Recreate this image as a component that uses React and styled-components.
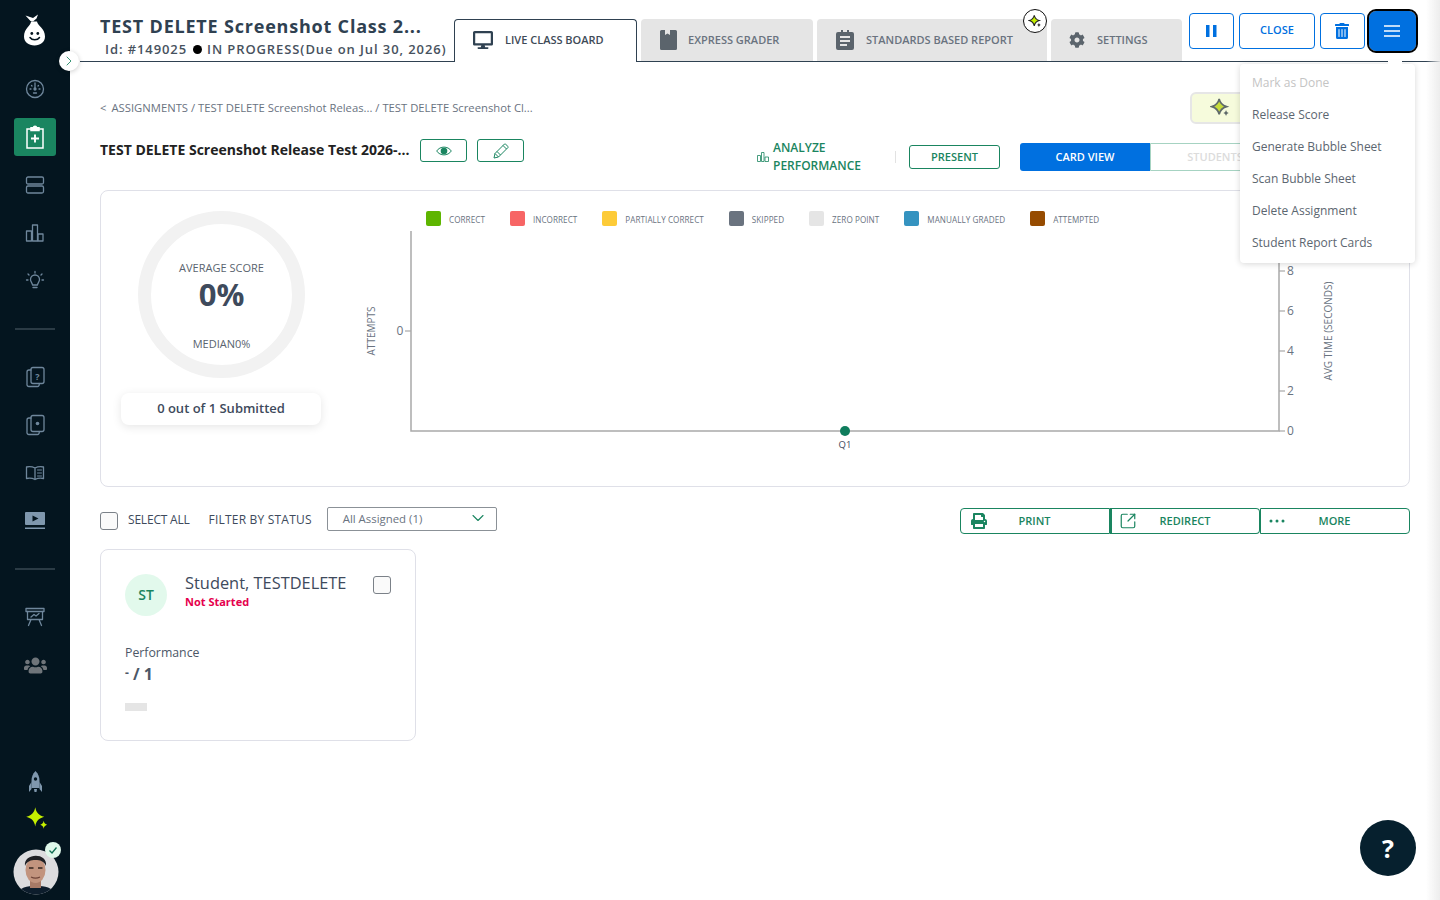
import styled, { createGlobalStyle } from "styled-components";
import { FaPrint, FaCog, FaTrashAlt, FaUsers, FaDesktop } from "react-icons/fa";
import { ChevronRight, ChevronDown, SquareArrowOutUpRight } from "lucide-react";

const GREEN = "#1a8560";
const BLUE = "#0070e0";
const SLATE = "#2f4151";
const GRAY = "#6a737f";

const GlobalStyle = createGlobalStyle`
  html, body { margin: 0; padding: 0; height: 100%; background: #fff; }
  body { font-family: "Open Sans", "Liberation Sans", sans-serif; overflow: hidden; }
  * { box-sizing: border-box; }
`;

const Page = styled.div`
  display: flex;
  width: 1440px;
  height: 900px;
  overflow: hidden;
`;

const Sidebar = styled.aside`
  flex: 0 0 70px;
  background: #04151f;
  display: flex;
  flex-direction: column;
  align-items: center;
  position: relative;
  color: #6f879c;
`;

const LogoWrap = styled.div`
  height: 65px;
  padding-top: 14px;
`;

const NavSlot = styled.div`
  width: 42px;
  height: 38px;
  margin: 5px 0;
  display: flex;
  align-items: center;
  justify-content: center;
  border-radius: 3px;
  background: ${(p) => (p.$active ? GREEN : "transparent")};
  color: ${(p) => (p.$active ? "#fff" : p.$muted ? "#6f757a" : "inherit")};
`;

const NavRule = styled.div`
  width: 40px;
  height: 2px;
  margin: 23px 0;
  background: #2b3b45;
`;

const BottomNav = styled.div`
  margin-top: auto;
  display: flex;
  flex-direction: column;
  align-items: center;
  padding-bottom: 5px;
`;

const BottomSlot = styled.div`
  height: 37px;
  padding-left: ${(p) => p.$shift || 0}px;
  display: flex;
  align-items: center;
  justify-content: center;
`;

const AvatarWrap = styled.div`
  position: relative;
  width: 46px;
  height: 46px;
  margin: 12px 0 0 1px;
`;

const AvatarBadge = styled.span`
  position: absolute;
  top: -7px;
  right: -2px;
  width: 16px;
  height: 16px;
  border-radius: 50%;
  background: #dff8ea;
  display: flex;
  align-items: center;
  justify-content: center;
`;

const SideToggle = styled.button`
  position: absolute;
  top: 51px;
  left: 59px;
  width: 20px;
  height: 20px;
  padding: 0;
  border: 0;
  border-radius: 50%;
  background: #fff;
  color: ${GREEN};
  box-shadow: 0 1px 5px rgba(0, 0, 0, 0.2);
  display: flex;
  align-items: center;
  justify-content: center;
  z-index: 5;
`;

const Main = styled.main`
  flex: 1;
  min-width: 0;
  position: relative;
`;

const Header = styled.header`
  height: 62px;
  margin-left: 10px;
  border-bottom: 1px solid ${SLATE};
  display: flex;
  position: relative;
`;

const TitleBlock = styled.div`
  width: 374px;
  padding: 14px 0 0 20px;
`;

const ClassTitle = styled.div`
  font-size: 18px;
  line-height: 25px;
  font-weight: 700;
  letter-spacing: 0.8px;
  color: ${SLATE};
  white-space: nowrap;
`;

const ClassMeta = styled.div`
  display: flex;
  align-items: center;
  margin: 1px 0 0 5px;
  font-size: 13px;
  line-height: 18px;
  font-weight: 600;
  letter-spacing: 0.91px;
  color: #47525e;
  white-space: nowrap;
`;

const MetaDot = styled.span`
  width: 9px;
  height: 9px;
  margin: 0 5px 0 6px;
  border-radius: 50%;
  background: #000;
`;

const Tabs = styled.nav`
  display: flex;
  gap: 4px;
  height: 43px;
  margin-top: 19px;
`;

const Tab = styled.div`
  position: relative;
  width: ${(p) => p.$w}px;
  height: ${(p) => (p.$active ? 43 : 42)}px;
  padding-left: ${(p) => p.$pad}px;
  display: flex;
  align-items: center;
  gap: ${(p) => p.$gap}px;
  padding-bottom: ${(p) => (p.$active ? 3 : 1)}px;
  font-size: 11px;
  font-weight: 600;
  color: ${(p) => (p.$active ? "#3e4a57" : GRAY)};
  white-space: nowrap;
  border-radius: 4px 4px 0 0;
  background: ${(p) => (p.$active ? "#fff" : "#e5e5e5")};
  border: ${(p) => (p.$active ? `1px solid ${SLATE}` : "0")};
  border-bottom: 0;
  z-index: 1;
`;

const TabIcon = styled.span`
  display: flex;
  width: 20px;
  justify-content: center;
  color: ${(p) => (p.$active ? SLATE : "#5b646c")};
`;

const SparkBadge = styled.span`
  position: absolute;
  top: -10px;
  right: 0;
  width: 24px;
  height: 24px;
  border-radius: 50%;
  background: #fff;
  border: 1px solid #111;
  display: flex;
  align-items: center;
  justify-content: center;
`;

const Actions = styled.div`
  display: flex;
  align-items: center;
  gap: 5px;
  margin-left: 7px;
  height: 62px;
`;

const HeadButton = styled.button`
  width: ${(p) => p.$w}px;
  height: 36px;
  padding: 0 ${(p) => p.$nudge || 0}px ${(p) => (p.$text ? 3 : 0)}px 0;
  background: #fff;
  border: 1px solid ${BLUE};
  border-radius: 4px;
  color: ${BLUE};
  font-family: inherit;
  font-size: 11px;
  font-weight: 600;
  display: flex;
  align-items: center;
  justify-content: center;
`;

const MenuButton = styled.button`
  width: 47px;
  height: 40px;
  margin-left: -1px;
  padding: 0 2px 0 0;
  border: 0;
  border-radius: 7px;
  background: ${BLUE};
  outline: 2px solid #000;
  color: #fff;
  display: flex;
  align-items: center;
  justify-content: center;
`;

const Dropdown = styled.ul`
  position: absolute;
  top: 64px;
  left: 1160px;
  width: 175px;
  height: 199px;
  margin: 0;
  padding: 2px 0 0;
  list-style: none;
  background: #fff;
  border-radius: 4px;
  box-shadow: 0 1px 6px rgba(0, 0, 0, 0.16);
  z-index: 4;
  &::before {
    content: "";
    position: absolute;
    top: -4px;
    left: 148px;
    width: 14px;
    height: 5px;
    background: #fff;
  }
`;

const DropItem = styled.li`
  height: 32px;
  padding-left: 12px;
  display: flex;
  align-items: center;
  font-size: 12px;
  color: ${(p) => (p.$disabled ? "#c4c4c4" : "#5c6670")};
  white-space: nowrap;
`;

const Content = styled.div`
  padding: 0 30px;
`;

const CrumbRow = styled.div`
  margin-top: 30px;
  height: 32px;
  display: flex;
  align-items: center;
  justify-content: space-between;
`;

const Crumbs = styled.div`
  padding-bottom: 2px;
  font-size: 11.28px;
  color: ${GRAY};
  white-space: nowrap;
`;

const CrumbBack = styled.span`
  margin-right: 5px;
`;

const AiPill = styled.div`
  width: 80px;
  height: 32px;
  margin-right: 140px;
  padding-left: 18px;
  background: #f6fbdc;
  border: 2px solid #e6e6e6;
  border-radius: 6px;
  display: flex;
  align-items: center;
`;

const AssignRow = styled.div`
  margin-top: 15px;
  height: 32px;
  display: flex;
  align-items: flex-start;
`;

const AssignTitle = styled.div`
  height: 23px;
  width: 320px;
  font-size: 14px;
  line-height: 21px;
  font-weight: 700;
  color: #222;
  white-space: nowrap;
`;

const OutlineIcon = styled.button`
  width: 47px;
  height: 23px;
  margin-right: 10px;
  padding: 0;
  background: #fff;
  border: 1px solid ${GREEN};
  border-radius: 3px;
  color: ${GREEN};
  display: flex;
  align-items: center;
  justify-content: center;
`;

const ToolGroup = styled.div`
  margin: 4px 130px 0 auto;
  height: 28px;
  display: flex;
  align-items: center;
`;

const Analyze = styled.div`
  display: flex;
  align-items: center;
  gap: 4px;
  width: 138px;
  height: 36px;
  font-size: 12px;
  line-height: 18px;
  font-weight: 600;
  color: ${GREEN};
`;

const ToolRule = styled.span`
  width: 1px;
  height: 12px;
  margin-right: 13px;
  background: #e2e2e2;
`;

const PresentBtn = styled.button`
  width: 91px;
  height: 24px;
  margin-right: 20px;
  padding: 0 0 2px;
  background: #fff;
  border: 1px solid ${GREEN};
  border-radius: 3px;
  color: ${GREEN};
  font-family: inherit;
  font-size: 11px;
  font-weight: 600;
`;

const ViewBtn = styled.div`
  width: 130px;
  height: 28px;
  padding-bottom: 2px;
  display: flex;
  align-items: center;
  justify-content: center;
  font-size: 11px;
  font-weight: 600;
  border-radius: ${(p) => (p.$on ? "3px 0 0 3px" : "0 3px 3px 0")};
  background: ${(p) => (p.$on ? BLUE : "#fff")};
  color: ${(p) => (p.$on ? "#fff" : "#dcdcdc")};
  border: ${(p) => (p.$on ? "0" : "1px solid #a6d3c2")};
`;

const Panel = styled.section`
  margin-top: 19px;
  height: 297px;
  border: 1px solid #dfe0e8;
  border-radius: 8px;
  display: flex;
`;

const ScoreCol = styled.div`
  width: 259px;
  padding: 20px 0 0 20px;
  display: flex;
  flex-direction: column;
`;

const Ring = styled.div`
  width: 167px;
  height: 167px;
  margin-left: 17px;
  border: 13px solid #f2f2f2;
  border-radius: 50%;
  display: flex;
  flex-direction: column;
  align-items: center;
  font-size: 11px;
`;

const RingLabel = styled.div`
  margin-top: 36px;
  line-height: 16px;
  font-weight: 500;
  color: #59636e;
`;

const RingValue = styled.div`
  font-size: 31px;
  line-height: 36px;
  font-weight: 700;
  color: #3e4a5c;
`;

const RingMedian = styled.div`
  margin-top: 24px;
  line-height: 16px;
  font-weight: 500;
  color: #59636e;
`;

const SubmittedPill = styled.div`
  width: 200px;
  height: 32px;
  margin-top: 15px;
  padding-bottom: 2px;
  border-radius: 8px;
  background: #fff;
  box-shadow: 0 2px 10px rgba(0, 0, 0, 0.1);
  display: flex;
  align-items: center;
  justify-content: center;
  font-size: 13px;
  font-weight: 600;
  color: #3e4a5c;
`;

const ChartCol = styled.div`
  flex: 1;
  padding-top: 20px;
`;

const Legend = styled.div`
  display: flex;
  height: 15px;
  margin-left: 66px;
  gap: 25px;
`;

const LegendItem = styled.div`
  display: flex;
  align-items: center;
  gap: 8px;
  font-size: 8.13px;
  font-weight: 500;
  letter-spacing: 0.05px;
  color: ${GRAY};
  white-space: nowrap;
`;

const LegendLabel = styled.span`
  padding-top: 1px;
`;

const Swatch = styled.span`
  width: 15px;
  height: 15px;
  border-radius: 2px;
  background: ${(p) => p.$c};
`;

const ChartSvg = styled.svg`
  display: block;
  margin-top: 4px;
  font-family: "Open Sans", "Liberation Sans", sans-serif;
`;

const FilterRow = styled.div`
  margin-top: 20px;
  height: 27px;
  display: flex;
  align-items: center;
`;

const Check = styled.span`
  flex: none;
  width: 18px;
  height: 18px;
  border: 1px solid #7b8188;
  border-radius: 3px;
  background: #fafafa;
`;

const FilterText = styled.span`
  margin-left: ${(p) => p.$ml}px;
  padding-bottom: 2px;
  font-size: 12px;
  font-weight: 500;
  letter-spacing: ${(p) => p.$ls}px;
  color: #3e4a5c;
  white-space: nowrap;
`;

const SelectBox = styled.div`
  width: 170px;
  height: 24px;
  margin: -3px 0 0 15px;
  padding: 0 8px 2px 15px;
  border: 1px solid #8b9197;
  border-radius: 2px;
  display: flex;
  align-items: center;
  justify-content: space-between;
  font-size: 11.4px;
  color: ${GRAY};
`;

const BtnGroup = styled.div`
  margin-left: auto;
  display: flex;
  padding-top: 1px;
`;

const GroupBtn = styled.button`
  position: relative;
  width: 150px;
  height: 26px;
  padding: 0 1px 2px 0;
  background: #fff;
  border: 1px solid ${GREEN};
  border-left-width: ${(p) => (p.$thick ? 2 : 1)}px;
  border-radius: ${(p) => p.$r};
  color: ${GREEN};
  font-family: inherit;
  font-size: 11px;
  font-weight: 600;
  display: flex;
  align-items: center;
  justify-content: center;
`;

const GroupIcon = styled.span`
  position: absolute;
  left: ${(p) => p.$left}px;
  top: ${(p) => p.$top}px;
  display: flex;
`;

const StudentCard = styled.article`
  width: 316px;
  height: 192px;
  margin-top: 15px;
  padding: 24px 24px 0;
  border: 1px solid #dfe0e8;
  border-radius: 8px;
`;

const CardTop = styled.div`
  display: flex;
  align-items: flex-start;
`;

const Initials = styled.div`
  flex: none;
  width: 42px;
  height: 42px;
  padding-bottom: 2px;
  border-radius: 50%;
  background: #e2f9ec;
  color: ${GREEN};
  font-size: 14px;
  font-weight: 600;
  display: flex;
  align-items: center;
  justify-content: center;
`;

const NameBlock = styled.div`
  flex: 1;
  margin: -1px 0 0 18px;
`;

const StudentName = styled.div`
  font-size: 16.4px;
  line-height: 20px;
  font-weight: 500;
  color: #3e4a5c;
  white-space: nowrap;
`;

const StudentStatus = styled.div`
  font-size: 11px;
  line-height: 18px;
  font-weight: 700;
  color: #e5004d;
`;

const CardCheck = styled(Check)`
  margin-top: 2px;
`;

const PerfLabel = styled.div`
  margin-top: 28px;
  font-size: 12.3px;
  line-height: 18px;
  color: #4c5767;
`;

const PerfValue = styled.div`
  font-size: 16px;
  line-height: 22px;
  font-weight: 700;
  color: #4c5767;
`;

const PerfDash = styled.span`
  font-size: 12px;
  vertical-align: 3px;
`;

const PerfBar = styled.div`
  width: 22px;
  height: 8px;
  margin-top: 18px;
  background: #e5e5e5;
`;

const HelpBtn = styled.button`
  position: fixed;
  left: 1360px;
  top: 820px;
  width: 56px;
  height: 56px;
  padding: 0;
  border: 0;
  border-radius: 50%;
  background: #06202e;
  color: #fff;
  font-family: inherit;
  font-size: 25px;
  font-weight: 700;
`;

const EdgeShade = styled.div`
  position: fixed;
  top: 0;
  right: 0;
  width: 14px;
  height: 900px;
  background: linear-gradient(to right, rgba(235, 235, 235, 0), rgba(235, 235, 235, 0.9));
  pointer-events: none;
  z-index: 6;
`;

const Line = ({ children, size = 26, ...rest }) => (
  <svg width={size} height={size} viewBox="0 0 26 26" fill="none" stroke="currentColor" strokeWidth="1.3" strokeLinecap="round" strokeLinejoin="round" {...rest}>
    {children}
  </svg>
);

const Logo = () => (
  <svg width="22" height="32" viewBox="0 0 22 32">
    <path d="M1.500 1.500 L6 3 L9 4 L14 0.500 L12.500 4.500 L9 7.500 L6.500 7 Z" fill="#fff" />
    <path d="M7 7.500 h6 c.5 4 8 7 8 15 c0 5.500-4.500 9-10.500 9 C4.500 31.500 0 28 0 22.500 C0 14.500 7 11.500 7 7.500 z" fill="#fff" />
    <circle cx="7.800" cy="19.500" r="1.400" fill="#04151f" />
    <circle cx="13.800" cy="19.500" r="1.400" fill="#04151f" />
    <path d="M6 23.500 c2 3 7.500 3 9.500 0" stroke="#04151f" strokeWidth="1.500" fill="none" strokeLinecap="round" />
  </svg>
);

const Sparkle = ({ size = 22, color = "#c6f000", stroke = "none", small }) => (
  <svg width={size} height={size} viewBox="0 0 24 24">
    <path d="M10 2 C11 7 13 9 18 10.500 C13 12 11 14 10 19 C9 14 7 12 2 10.500 C7 9 9 7 10 2 Z" fill={color} stroke={stroke} strokeWidth="1.800" />
    <path d="M17.500 14 C17.900 16 18.500 16.800 20.500 17.500 C18.500 18.200 17.900 19 17.500 21 C17.100 19 16.500 18.200 14.500 17.500 C16.500 16.800 17.100 16 17.500 14 Z" fill={small || color} />
  </svg>
);

const Rocket = () => (
  <svg width="13" height="22" viewBox="0 0 13 22" fill="#7f97ad">
    <path d="M6.500 0 C9.500 3 10.500 6 10.500 10 L10.500 17 L2.500 17 L2.500 10 C2.500 6 3.500 3 6.500 0 Z" />
    <path d="M2.500 11 L0 15 L0 21 L2.500 18 Z M10.500 11 L13 15 L13 21 L10.500 18 Z M5 18 h3 l-.5 3 h-2 z" />
    <circle cx="6.500" cy="8" r="1.700" fill="#04151f" />
  </svg>
);

const Face = () => (
  <svg width="46" height="46" viewBox="0 0 46 46">
    <clipPath id="faceClip"><circle cx="23" cy="23" r="22.500" /></clipPath>
    <g clipPath="url(#faceClip)">
      <rect width="46" height="46" fill="#dcdcde" />
      <path d="M4 46 C6 38 14 37 23 37 C32 37 40 38 42 46 Z" fill="#0d1d2c" />
      <rect x="17" y="28" width="11" height="11" fill="#a87a66" />
      <ellipse cx="22.500" cy="21" rx="10" ry="13" fill="#c2947e" />
      <path d="M12 17 C10 4 35 3 33 17 C31 12 27 11 22.500 11 C18 11 14 12 12 17 Z" fill="#1f2024" />
      <path d="M16 19 h4.500 M25 19 h4.500" stroke="#35251f" strokeWidth="1.400" />
      <path d="M18 28 c3 1.500 6 1.500 9 0" stroke="#6f4438" strokeWidth="1.200" fill="none" />
    </g>
  </svg>
);

const ClipboardIcon = () => (
  <svg width="18" height="24" viewBox="0 0 18 24" fill="none" stroke="#fff" strokeWidth="1.500">
    <path d="M5 4 H1 V23 H17 V4 H13" />
    <path d="M5 5.500 V2.800 H7.500 C7.500 .6 10.500 .6 10.500 2.800 H13 V5.500 Z" fill="#fff" />
    <path d="M9 9.500 V17.500 M5 13.500 H13" strokeWidth="1.900" />
  </svg>
);

const BookIcon = () => (
  <svg width="17" height="20" viewBox="0 0 17 20" fill="currentColor">
    <path d="M1.500 0 H5 V5 L7.500 3.500 L10 5 V0 H15.500 A1.500 1.500 0 0 1 17 1.500 V18.500 A1.500 1.500 0 0 1 15.500 20 H1.500 A1.500 1.500 0 0 1 0 18.500 V1.500 A1.500 1.500 0 0 1 1.500 0 Z" />
  </svg>
);

const ReportIcon = () => (
  <svg width="18" height="20" viewBox="0 0 18 20">
    <path d="M2 2 H5 V0 H7 V2 H11 V0 H13 V2 H16 A2 2 0 0 1 18 4 V18 A2 2 0 0 1 16 20 H2 A2 2 0 0 1 0 18 V4 A2 2 0 0 1 2 2 Z" fill="currentColor" />
    <path d="M4 7 H14 M4 11 H14 M4 15 H11" stroke="#e5e5e5" strokeWidth="1.800" />
  </svg>
);

const EyeIcon = () => (
  <svg width="16" height="12" viewBox="0 0 16 12" fill="none" stroke="currentColor" strokeWidth="1">
    <path d="M.7 6 C4 .8 12 .8 15.300 6 C12 11.200 4 11.200 .7 6 Z" />
    <circle cx="8" cy="6" r="3.300" fill="currentColor" stroke="none" />
  </svg>
);

const PencilIcon = () => (
  <svg width="16" height="16" viewBox="0 0 16 16" fill="none" stroke="currentColor" strokeWidth="1" strokeLinejoin="round">
    <path d="M1 15 L2 10.500 L11.500 1 C12.500 0.500 15.500 3.500 15 4.500 L5.500 14 Z" />
    <path d="M2 10.500 L5.500 14 M4 8.500 L7.500 12 M10 2.500 L13.500 6" />
  </svg>
);

const legendItems = [
  ["CORRECT", "#5eb500"],
  ["INCORRECT", "#f76565"],
  ["PARTIALLY CORRECT", "#fdcb38"],
  ["SKIPPED", "#6a737f"],
  ["ZERO POINT", "#e5e5e5"],
  ["MANUALLY GRADED", "#3593c0"],
  ["ATTEMPTED", "#964b00"],
];

const menuItems = ["Release Score", "Generate Bubble Sheet", "Scan Bubble Sheet", "Delete Assignment", "Student Report Cards"];

const rightTicks = [0, 2, 4, 6, 8];

const Chart = () => (
  <ChartSvg width="990" height="235" viewBox="360 230 990 235">
    <path d="M411 231 V431 H1279 V231" fill="none" stroke="#a9a9a9" strokeWidth="1.500" />
    <path d="M405 331 H411" stroke="#a9a9a9" strokeWidth="1.200" />
    <text x="400" y="335" textAnchor="middle" fontSize="12" fill="#6a737f">0</text>
    <text transform="translate(375 331) rotate(-90)" textAnchor="middle" fontSize="10" fill="#6a737f">ATTEMPTS</text>
    {rightTicks.map((t) => (
      <g key={t}>
        <path d={`M1279 ${431 - t * 20} H1285`} stroke="#a9a9a9" strokeWidth="1.200" />
        <text x="1287" y={435 - t * 20} fontSize="12" fill="#6a737f">{t}</text>
      </g>
    ))}
    <text transform="translate(1332 331) rotate(-90)" textAnchor="middle" fontSize="10" fill="#6a737f">AVG TIME (SECONDS)</text>
    <circle cx="845" cy="431" r="5" fill="#0f7d5d" />
    <text x="845" y="448" textAnchor="middle" fontSize="9.500" fontWeight="500" fill="#3e4a5c">Q1</text>
  </ChartSvg>
);

export default function App() {
  return (
    <Page>
      <GlobalStyle />
      <Sidebar>
        <LogoWrap><Logo /></LogoWrap>
        <NavSlot>
          <Line>
            <circle cx="13" cy="13" r="8.500" />
            <path d="M13 13 V7 M8 13 H9 M17 13 H18 M9.500 9.500 L10 10 M16.500 9.500 L16 10 M11.500 17 H14.500" />
            <circle cx="13" cy="13" r="1" fill="currentColor" />
          </Line>
        </NavSlot>
        <NavSlot $active><ClipboardIcon /></NavSlot>
        <NavSlot>
          <Line><rect x="4.500" y="5" width="17" height="7" rx="1.500" /><rect x="4.500" y="14" width="17" height="7" rx="1.500" /></Line>
        </NavSlot>
        <NavSlot>
          <Line><rect x="4.500" y="11" width="5" height="10" /><rect x="10.500" y="5" width="5" height="16" /><rect x="16" y="14" width="5" height="7" /></Line>
        </NavSlot>
        <NavSlot>
          <Line>
            <path d="M10.500 17 C10.500 15 8.500 14 8.500 11.500 A4.500 4.500 0 0 1 17.500 11.500 C17.500 14 15.500 15 15.500 17 Z M11 19.500 H15" />
            <path d="M13 3.500 V5 M6 6 L7 7 M20 6 L19 7 M4.500 12 H6 M20 12 H21.500" />
          </Line>
        </NavSlot>
        <NavRule />
        <NavSlot>
          <Line>
            <rect x="9" y="3.500" width="13" height="16" rx="2" />
            <path d="M9 6 H7 A2 2 0 0 0 5 8 V20 A2 2 0 0 0 7 22.500 H15 A2 2 0 0 0 17 19.500" />
            <text x="15.500" y="15.500" textAnchor="middle" fontSize="9" fontWeight="700" fill="currentColor" stroke="none">?</text>
          </Line>
        </NavSlot>
        <NavSlot>
          <Line>
            <rect x="9" y="3.500" width="13" height="16" rx="2" />
            <path d="M9 6 H7 A2 2 0 0 0 5 8 V20 A2 2 0 0 0 7 22.500 H15 A2 2 0 0 0 17 19.500" />
            <circle cx="15.500" cy="11.500" r="1.800" fill="currentColor" stroke="none" />
          </Line>
        </NavSlot>
        <NavSlot>
          <Line>
            <path d="M13 8 C10 6.500 7 6.500 4.500 7 V18.500 C7 18 10 18 13 19.500 C16 18 19 18 21.500 18.500 V7 C19 6.500 16 6.500 13 8 Z M13 8 V19.500" />
            <path d="M15.500 10 H19.500 M15.500 13 H19.500 M15.500 16 H19.500" strokeWidth="1" />
          </Line>
        </NavSlot>
        <NavSlot>
          <svg width="26" height="26" viewBox="0 0 26 26">
            <rect x="3" y="4" width="20" height="13" rx="1" fill="#7f97ad" />
            <path d="M10.500 7.500 L16.500 10.500 L10.500 13.500 Z" fill="#04151f" />
            <rect x="3" y="19.500" width="20" height="1.500" fill="#7f97ad" />
          </svg>
        </NavSlot>
        <NavRule />
        <NavSlot>
          <Line>
            <rect x="4" y="4.500" width="18" height="3" />
            <path d="M5.500 7.500 V15.500 H20.500 V7.500 M9 15.500 L6.500 21.500 M17 15.500 L19.500 21.500 M9 13 L12 10.500 L14 12 L17 9.500" />
          </Line>
        </NavSlot>
        <NavSlot $muted><FaUsers size={23} /></NavSlot>
        <BottomNav>
          <BottomSlot><Rocket /></BottomSlot>
          <BottomSlot $shift={4}><Sparkle size={27} /></BottomSlot>
          <AvatarWrap>
            <Face />
            <AvatarBadge>
              <svg width="10" height="10" viewBox="0 0 10 10" fill="none" stroke="#0f6e52" strokeWidth="1.300"><path d="M1.500 5.500 L4 8 L8.500 2.500" /></svg>
            </AvatarBadge>
          </AvatarWrap>
        </BottomNav>
        <SideToggle><ChevronRight size={16} strokeWidth={1.3} /></SideToggle>
      </Sidebar>

      <Main>
        <Header>
          <TitleBlock>
            <ClassTitle>TEST DELETE Screenshot Class 2...</ClassTitle>
            <ClassMeta>Id: #149025<MetaDot />IN PROGRESS(Due on Jul 30, 2026)</ClassMeta>
          </TitleBlock>
          <Tabs>
            <Tab $active $w={183} $pad={18} $gap={12}>
              <TabIcon $active><FaDesktop size={20} /></TabIcon>LIVE CLASS BOARD
            </Tab>
            <Tab $w={172} $pad={17} $gap={10}>
              <TabIcon><BookIcon /></TabIcon>EXPRESS GRADER
            </Tab>
            <Tab $w={230} $pad={18} $gap={11}>
              <TabIcon><ReportIcon /></TabIcon>STANDARDS BASED REPORT
              <SparkBadge><Sparkle size={15} color="#c6f000" stroke="#222" small="#222" /></SparkBadge>
            </Tab>
            <Tab $w={131} $pad={16} $gap={10}>
              <TabIcon><FaCog size={16} /></TabIcon>SETTINGS
            </Tab>
          </Tabs>
          <Actions>
            <HeadButton $w={45}>
              <svg width="11" height="12" viewBox="0 0 11 12" fill="currentColor"><rect width="3.500" height="12" /><rect x="7" width="3.500" height="12" /></svg>
            </HeadButton>
            <HeadButton $w={76} $text>CLOSE</HeadButton>
            <HeadButton $w={45} $nudge={2}><FaTrashAlt size={16} /></HeadButton>
            <MenuButton>
              <svg width="16" height="12" viewBox="0 0 16 12" stroke="#fff" strokeWidth="1.500"><path d="M0 1 H16 M0 6 H16 M0 11 H16" /></svg>
            </MenuButton>
          </Actions>
          <Dropdown>
            <DropItem $disabled>Mark as Done</DropItem>
            {menuItems.map((m) => (
              <DropItem key={m}>{m}</DropItem>
            ))}
          </Dropdown>
        </Header>

        <Content>
          <CrumbRow>
            <Crumbs><CrumbBack>&lt;</CrumbBack>ASSIGNMENTS / TEST DELETE Screenshot Releas... / TEST DELETE Screenshot Cl...</Crumbs>
            <AiPill><Sparkle size={22} color="#c6dc3c" stroke="#5f6a6a" small="#5f6a6a" /></AiPill>
          </CrumbRow>

          <AssignRow>
            <AssignTitle>TEST DELETE Screenshot Release Test 2026-...</AssignTitle>
            <OutlineIcon><EyeIcon /></OutlineIcon>
            <OutlineIcon><PencilIcon /></OutlineIcon>
            <ToolGroup>
              <Analyze>
                <svg width="12" height="10" viewBox="0 0 12 10" fill="none" stroke="currentColor" strokeWidth=".8"><path d="M.5 3.500 H3.500 V9.500 H.5 Z M4.500 .5 H7 V9.500 H4.500 Z M8 5 H11.500 V9.500 H8 Z" /></svg>
                <span>ANALYZE<br />PERFORMANCE</span>
              </Analyze>
              <ToolRule />
              <PresentBtn>PRESENT</PresentBtn>
              <ViewBtn $on>CARD VIEW</ViewBtn>
              <ViewBtn>STUDENTS</ViewBtn>
            </ToolGroup>
          </AssignRow>

          <Panel>
            <ScoreCol>
              <Ring>
                <RingLabel>AVERAGE SCORE</RingLabel>
                <RingValue>0%</RingValue>
                <RingMedian>MEDIAN0%</RingMedian>
              </Ring>
              <SubmittedPill>0 out of 1 Submitted</SubmittedPill>
            </ScoreCol>
            <ChartCol>
              <Legend>
                {legendItems.map(([label, color]) => (
                  <LegendItem key={label}>
                    <Swatch $c={color} />
                    <LegendLabel>{label}</LegendLabel>
                  </LegendItem>
                ))}
              </Legend>
              <Chart />
            </ChartCol>
          </Panel>

          <FilterRow>
            <Check />
            <FilterText $ml={10} $ls={-0.2}>SELECT ALL</FilterText>
            <FilterText $ml={19} $ls={0.2}>FILTER BY STATUS</FilterText>
            <SelectBox>
              All Assigned (1)
              <ChevronDown size={20} color={GREEN} strokeWidth={1.3} />
            </SelectBox>
            <BtnGroup>
              <GroupBtn $r="4px 0 0 4px">
                <GroupIcon $left={10} $top={4}><FaPrint size={16} /></GroupIcon>PRINT
              </GroupBtn>
              <GroupBtn $r="0 4px 4px 0" $thick>
                <GroupIcon $left={7} $top={3}><SquareArrowOutUpRight size={18} strokeWidth={1.6} /></GroupIcon>REDIRECT
              </GroupBtn>
              <GroupBtn $r="0 4px 4px 0">
                <GroupIcon $left={8} $top={10}>
                  <svg width="16" height="4" viewBox="0 0 16 4" fill="currentColor"><circle cx="2" cy="2" r="1.500" /><circle cx="8" cy="2" r="1.500" /><circle cx="14" cy="2" r="1.500" /></svg>
                </GroupIcon>
                MORE
              </GroupBtn>
            </BtnGroup>
          </FilterRow>

          <StudentCard>
            <CardTop>
              <Initials>ST</Initials>
              <NameBlock>
                <StudentName>Student, TESTDELETE</StudentName>
                <StudentStatus>Not Started</StudentStatus>
              </NameBlock>
              <CardCheck />
            </CardTop>
            <PerfLabel>Performance</PerfLabel>
            <PerfValue><PerfDash>-</PerfDash> / 1</PerfValue>
            <PerfBar />
          </StudentCard>
        </Content>
        <HelpBtn>?</HelpBtn>
        <EdgeShade />
      </Main>
    </Page>
  );
}
